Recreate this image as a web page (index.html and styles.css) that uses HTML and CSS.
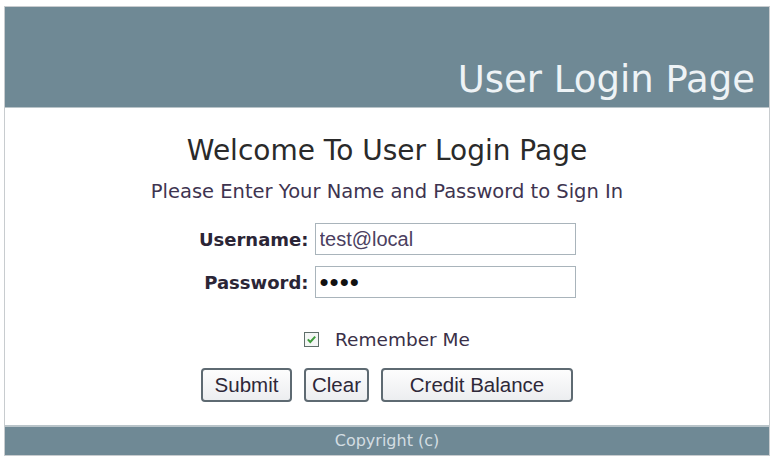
FILE: index.html
```html
<!DOCTYPE html>
<html lang="en">

<head>
	<meta charset="UTF-8">
	<meta name="viewport" content="width=device-width, initial-scale=1.0">
	<title>User Login Page</title>
	<link rel="stylesheet" href="styles.css">
</head>

<body>
	<div id="page">
		<div id="header">
			<h1>User Login Page</h1>
		</div>

		<div id="content">
			<h2>Welcome To User Login Page</h2>
			<p class="intro">Please Enter Your Name and Password to Sign In</p>

			<form class="login" onsubmit="return false;">
				<div class="row">
					<label for="username">Username:</label>
					<input type="text" id="username" value="test@local">
				</div>
				<div class="row">
					<label for="password">Password:</label>
					<input type="password" id="password" value="test">
				</div>

				<label class="remember">
					<input type="checkbox" id="remember" checked>
					<span class="box">
						<svg viewBox="0 0 15 15" width="15" height="15">
							<rect x="0.5" y="0.5" width="14" height="14" fill="#f4f6f5" stroke="#5f6e6a" />
							<path d="M3.8 7.4 L6.3 10 L11.2 4.6" fill="none" stroke="#3f9c3c" stroke-width="2" />
						</svg>
					</span>
					<span>Remember Me</span>
				</label>

				<div class="buttons">
					<button type="submit" class="btn submit">Submit</button>
					<button type="reset" class="btn">Clear</button>
					<button type="button" class="btn wide">Credit Balance</button>
				</div>
			</form>
		</div>

		<div id="footer">Copyright (c)</div>
	</div>
</body>

</html>
```

FILE: styles.css
```css
html,
body {
	margin: 0;
	padding: 0;
	background-color: white;
	font-family: "DejaVu Sans", Verdana, sans-serif;
}

body {
	padding: 6px 3px 4px 4px;
}

#page {
	border: 1px solid #c8cccf;
	height: 450px;
	box-sizing: border-box;
	display: flex;
	flex-direction: column;
}

#header {
	background-color: #6f8995;
	height: 100px;
	display: flex;
	align-items: flex-end;
	justify-content: flex-end;
	border-bottom: 1px solid #b9c4c9;
}

#header>h1 {
	margin: 0 14px 6px 0;
	font-size: 37px;
	font-weight: normal;
	color: #eef3f6;
}

#content {
	flex: 1;
	display: flex;
	flex-direction: column;
	align-items: center;
}

#content>h2 {
	margin: 26px 0 0 0;
	font-size: 28px;
	font-weight: normal;
	color: #2a2a2a;
}

.intro {
	margin: 13px 0 0 0;
	font-size: 19.5px;
	color: #3e3450;
}

.login {
	margin-top: 20px;
	display: flex;
	flex-direction: column;
	align-items: center;
}

.row {
	display: flex;
	align-items: center;
	margin-bottom: 11px;
}

.row>label {
	width: 110px;
	text-align: right;
	margin-right: 6px;
	font-weight: bold;
	font-size: 18px;
	color: #2b2536;
}

.row>input {
	width: 261px;
	height: 32px;
	box-sizing: border-box;
	border: 1px solid #a9b4bb;
	padding: 2px 4px;
	font-family: "Liberation Sans", Arial, sans-serif;
	font-size: 20px;
	color: #4b4060;
}

#password {
	font-size: 26px;
	letter-spacing: 1px;
	color: #111;
}

.remember {
	display: flex;
	align-items: center;
	margin-top: 20px;
	cursor: pointer;
}

.remember>input {
	display: none;
}

.remember>.box {
	display: flex;
	margin-right: 16px;
}

.remember>span:last-child {
	font-size: 18.5px;
	color: #3a3048;
}

.buttons {
	display: flex;
	gap: 12px;
	margin-top: 18px;
}

.btn {
	height: 34px;
	padding: 0 6px;
	border: 2px solid #5e6a72;
	border-radius: 4px;
	background: linear-gradient(#fdfdfd, #eceef0);
	font-family: "Liberation Sans", Arial, sans-serif;
	font-size: 20.5px;
	color: #2e2838;
}

.btn.submit {
	width: 91px;
}

.btn.wide {
	width: 192px;
}

#footer {
	background-color: #6f8995;
	height: 30px;
	border-top: 2px solid #b9c4c9;
	box-sizing: border-box;
	text-align: center;
	font-size: 16px;
	line-height: 27px;
	color: #d3dde2;
}
```
